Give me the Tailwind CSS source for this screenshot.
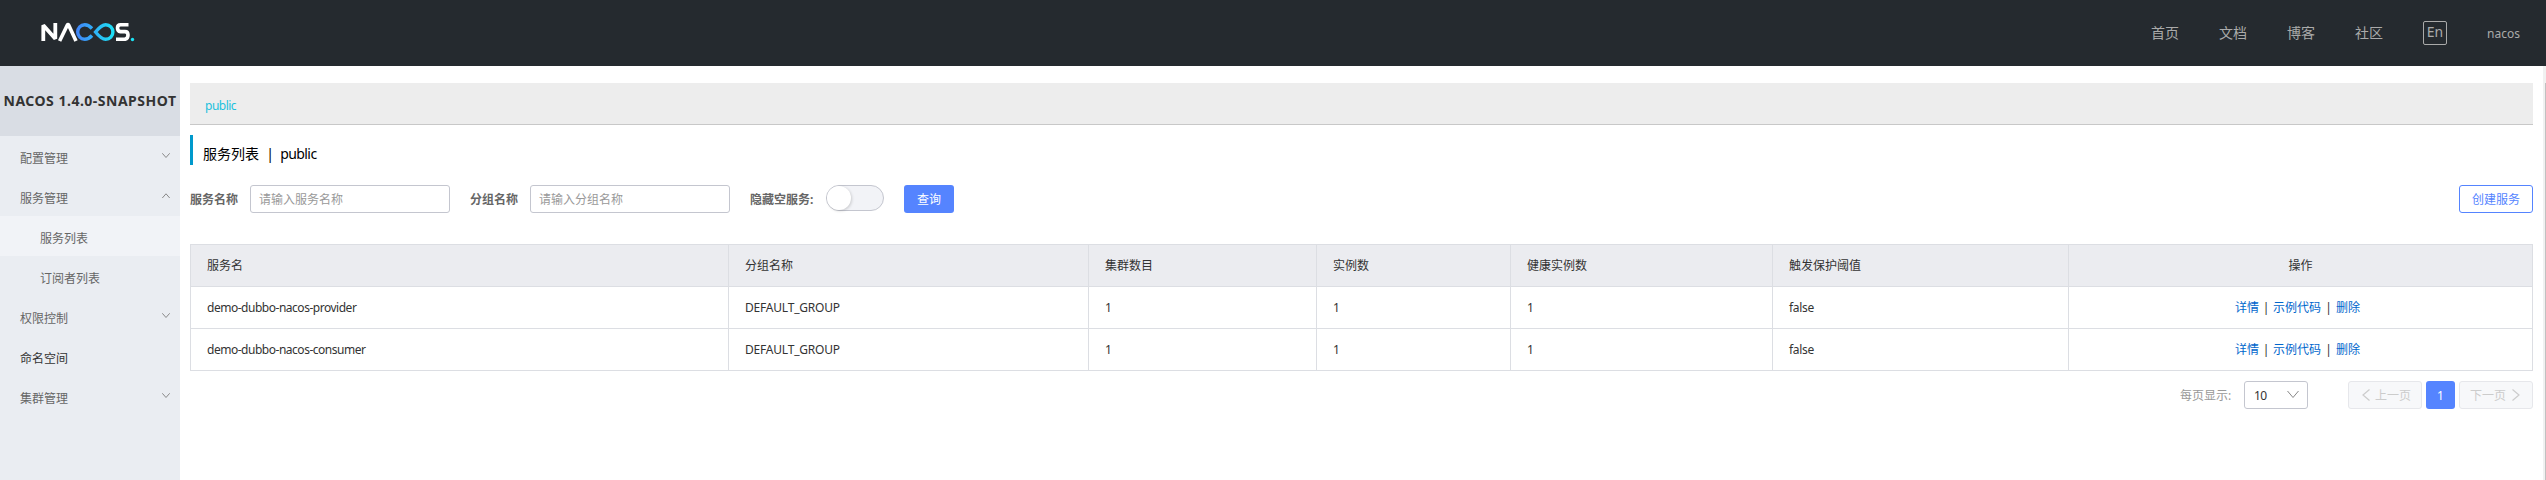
<!DOCTYPE html>
<html lang="zh-CN">
<head>
<meta charset="utf-8">
<title>Nacos</title>
<script src="https://cdn.jsdelivr.net/npm/@tailwindcss/browser@4"></script>
</head>
<body class="h-[480px] w-[2546px] overflow-hidden bg-white font-['Noto_Sans','Noto_Sans_CJK_SC',sans-serif] text-xs text-[#333333] flex flex-col">
<header class="h-[66px] shrink-0 bg-[#252a2f] flex items-center pl-[41px] pr-[25px] text-[#aaaaaa]">
  <svg class="w-[94px] h-[20px] -mt-0.5" viewBox="0 0 94 20" fill="none" stroke-width="3.4">
    <defs><linearGradient id="g" gradientUnits="userSpaceOnUse" x1="35" y1="0" x2="74" y2="0"><stop offset="0" stop-color="#4283f8"/><stop offset="1" stop-color="#1be3f5"/></linearGradient></defs>
    <path d="M2.300 19V3.300L14.300 16.700V1" stroke="#fff" stroke-width="3.800" stroke-linejoin="bevel"/>
    <path d="M18.600 19L26.300 3.200Q27 2 27.700 3.200L35 19" stroke="#fff" stroke-width="3.600"/>
    <path d="M51 6.500C48.500 3.800 46.500 2.700 43.700 2.700C39.700 2.700 36.700 5.900 36.700 10S39.700 17.300 43.700 17.300C46.500 17.300 48.500 16.200 51 13.500M54.500 10C58.500 5 61.500 2.700 64.700 2.700C68.900 2.700 71.900 5.900 71.900 10S68.900 17.300 64.700 17.300C61.500 17.300 58.500 15 54.500 10Z" stroke="url(#g)"/>
    <path d="M87.500 2.700H79.500Q76.500 2.700 76.500 6T79.500 9.600H84Q87 9.600 87 13T84 17.300H75" stroke="#fff" stroke-width="3.600"/>
    <circle cx="91.500" cy="17.500" r="1.700" fill="#1be3f5"/>
  </svg>
  <nav class="ml-auto flex items-center text-sm leading-5">
    <a class="mr-10">首页</a><a class="mr-10">文档</a><a class="mr-10">博客</a><a class="mr-10">社区</a>
    <span class="mr-10 h-6 w-6 border border-[#aaaaaa] rounded-xs text-center leading-5">En</span>
    <span class="text-xs w-[34px] mt-0.5">nacos</span>
  </nav>
</header>
<div class="flex flex-1 min-h-0">
  <aside class="w-[180px] shrink-0 bg-[#eaedf2] text-[#666666]">
    <h1 class="h-[70px] bg-[#d9dde4] text-center font-bold text-sm leading-[70px] tracking-[0.5px] text-[#333333] whitespace-nowrap">NACOS 1.4.0-SNAPSHOT</h1>
    <ul class="leading-[45px]">
      <li class="h-10 pl-5 pr-2.5 flex justify-between">配置管理<svg class="w-2 h-10" viewBox="0 0 8 40" fill="none" stroke="#888"><path d="M.3 17.300L4 21.500L7.700 17.300"/></svg></li>
      <li class="h-10 pl-5 pr-2.5 flex justify-between">服务管理<svg class="w-2 h-10" viewBox="0 0 8 40" fill="none" stroke="#888"><path d="M.3 22L4 17.800L7.700 22"/></svg></li>
      <li class="h-10 pl-10 bg-[#f1f3f7]">服务列表</li>
      <li class="h-10 pl-10">订阅者列表</li>
      <li class="h-10 pl-5 pr-2.5 flex justify-between">权限控制<svg class="w-2 h-10" viewBox="0 0 8 40" fill="none" stroke="#888"><path d="M.3 17.300L4 21.500L7.700 17.300"/></svg></li>
      <li class="h-10 pl-5 text-[#333333]">命名空间</li>
      <li class="h-10 pl-5 pr-2.5 flex justify-between">集群管理<svg class="w-2 h-10" viewBox="0 0 8 40" fill="none" stroke="#888"><path d="M.3 17.300L4 21.500L7.700 17.300"/></svg></li>
    </ul>
  </aside>
  <main class="flex-1 pl-2.5 pr-2.5 pt-[17px]">
    <div class="h-[42px] bg-[#ededed] border-b border-[#c8c8c8] pl-[15px] leading-[45px] tracking-[-0.5px] text-[#1bc1dd]">public</div>
    <h2 class="mt-2.5 h-[30px] border-l-3 border-[#0099cc] pl-2.5 text-sm leading-[37px] text-black whitespace-pre">服务列表  |  <span class="tracking-[-0.6px] -ml-px">public</span></h2>
    <form class="mt-5 h-7 flex leading-[30px]">
      <label class="w-[60px] font-bold text-[#666666]">服务名称</label>
      <div class="w-[200px] border border-[#c4c6cf] rounded-[3px] pl-2 leading-[28px] text-[#999999]">请输入服务名称</div>
      <label class="ml-5 w-[60px] font-bold text-[#666666]">分组名称</label>
      <div class="w-[200px] border border-[#c4c6cf] rounded-[3px] pl-2 leading-[28px] text-[#999999]">请输入分组名称</div>
      <label class="ml-5 w-[76px] font-bold text-[#666666]">隐藏空服务:</label>
      <div class="w-[58px] h-[26px] border border-[#c4c6cf] rounded-full bg-[#f2f3f7]"><div class="size-6 rounded-full bg-white shadow-[1px_1px_3px_0_rgba(0,0,0,0.16)]"></div></div>
      <div class="ml-5 w-[50px] rounded-[3px] bg-[#5584ff] text-white text-center">查询</div>
      <div class="ml-auto w-[74px] border border-[#5584ff] rounded-[3px] text-[#5584ff] text-center leading-[28px]">创建服务</div>
    </form>
    <table class="mt-[31px] w-[2343px] table-fixed border-collapse text-left leading-5">
      <colgroup><col class="w-[538px]"><col class="w-[360px]"><col class="w-[228px]"><col class="w-[194px]"><col class="w-[262px]"><col class="w-[296px]"><col class="w-[464px]"></colgroup>
      <thead><tr class="h-[42px] bg-[#ebecf0] *:border *:border-[#dcdee3] *:px-4 *:font-normal"><th>服务名</th><th>分组名称</th><th>集群数目</th><th>实例数</th><th>健康实例数</th><th>触发保护阈值</th><th class="text-center">操作</th></tr></thead>
      <tbody>
        <tr class="h-[42px] *:border *:border-[#dcdee3] *:px-4"><td class="tracking-[-0.48px]">demo-dubbo-nacos-provider</td><td class="tracking-[-0.2px]">DEFAULT_GROUP</td><td>1</td><td>1</td><td>1</td><td class="tracking-[-0.3px]">false</td><td><div class="flex justify-center text-[#0066cc] pr-1.5"><a>详情</a><span class="w-[14px] text-center text-[#333333]">|</span><a>示例代码</a><span class="w-[15px] text-center text-[#333333]">|</span><a>删除</a></div></td></tr>
        <tr class="h-[42px] *:border *:border-[#dcdee3] *:px-4"><td class="tracking-[-0.48px]">demo-dubbo-nacos-consumer</td><td class="tracking-[-0.2px]">DEFAULT_GROUP</td><td>1</td><td>1</td><td>1</td><td class="tracking-[-0.3px]">false</td><td><div class="flex justify-center text-[#0066cc] pr-1.5"><a>详情</a><span class="w-[14px] text-center text-[#333333]">|</span><a>示例代码</a><span class="w-[15px] text-center text-[#333333]">|</span><a>删除</a></div></td></tr>
      </tbody>
    </table>
    <div class="mt-2.5 h-7 flex justify-end leading-[29px]">
      <span class="w-16 text-[#999999]">每页显示:</span>
      <div class="w-16 border border-[#c4c6cf] rounded-[3px] pl-[9px] pr-2 flex justify-between items-center"><span class="tracking-[-0.5px]">10</span><svg class="w-3 h-3" viewBox="0 0 12 12" fill="none" stroke="#888"><path d="M.5 2L6 8.500L11.500 2"/></svg></div>
      <div class="ml-10 w-[74px] border border-[#e6e7eb] bg-[#f7f8fa] rounded-[3px] text-[#cccccc] flex items-center pl-[13px] gap-[5px]"><svg class="w-2 h-3" viewBox="0 0 8 12" fill="none" stroke="#ccc" stroke-width="1.200"><path d="M7.500 .5L1 6L7.500 11.500"/></svg>上一页</div>
      <div class="ml-1 w-[29px] rounded-[3px] bg-[#5584ff] text-white text-center">1</div>
      <div class="ml-1 w-[74px] border border-[#e6e7eb] bg-[#f7f8fa] rounded-[3px] text-[#cccccc] flex items-center pl-[10px] gap-[6px]">下一页<svg class="w-2 h-3" viewBox="0 0 8 12" fill="none" stroke="#ccc" stroke-width="1.200"><path d="M.5 .5L7 6L.5 11.500"/></svg></div>
    </div>
  </main>
  <div class="w-[3px] bg-[#f1f1f1] pt-[17px] flex justify-end"><div class="w-px bg-[#c1c1c1]"></div></div>
</div>
</body>
</html>
